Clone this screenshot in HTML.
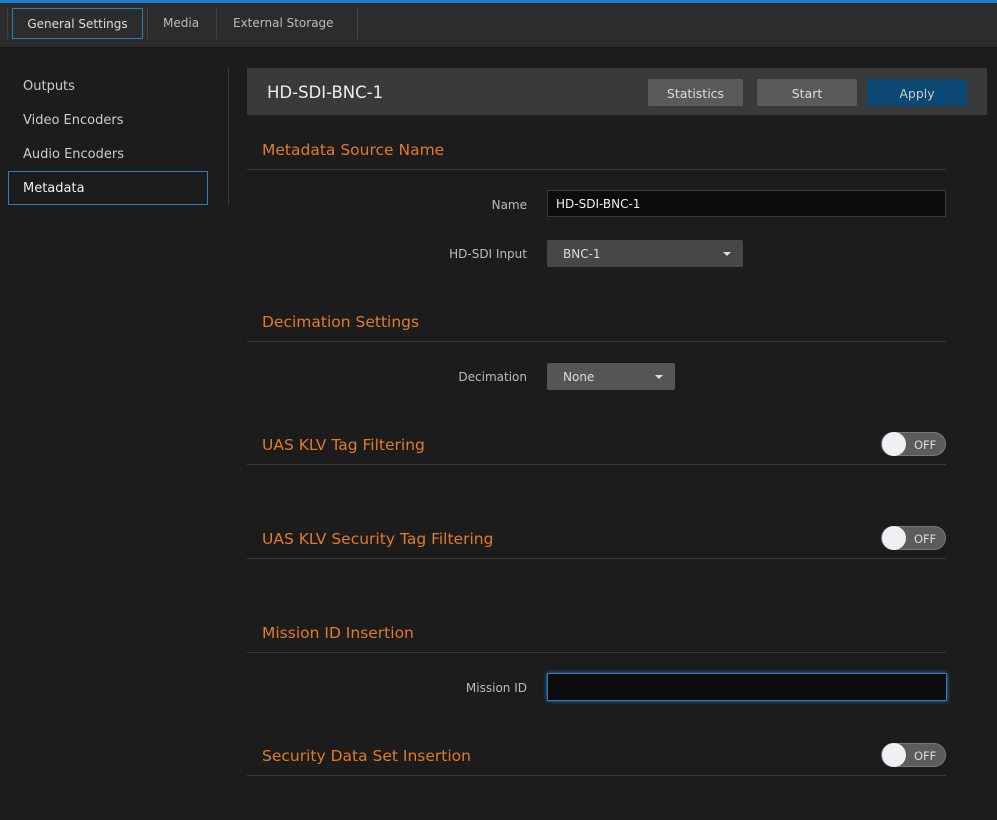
<!DOCTYPE html>
<html><head><style>
body{margin:0;width:997px;height:820px;background:#1c1c1c;font-family:"DejaVu Sans",sans-serif;position:relative;overflow:hidden;color:#ddd}
.a{position:absolute}
.top{left:0;top:0;width:997px;height:3px;background:#1d7bd0}
.nav{left:0;top:3px;width:997px;height:44px;background:#2c2c2c;border-bottom:1px solid #161616}
.tab{top:8px;height:29px;line-height:30px;font-size:12px;color:#bbb}
.sep{top:8px;width:1px;height:31px;background:#444}
.side{left:23px;font-size:13px;color:#ccc}
.h{left:262px;font-size:15.5px;color:#e07a2c}
.ln{left:247px;width:699px;height:1px;background:#3a3a3a}
.lbl{font-size:12px;color:#bbb;text-align:right;width:200px;left:327px}
.btn{top:79px;height:27px;line-height:29px;text-align:center;font-size:12.5px;color:#ddd;background:#5a5a5a;border-radius:2px;width:100px}
.tg{left:881px;width:65px;height:24px;border-radius:12px;background:#5c5c5c;border:1px solid #777;box-sizing:border-box}
.tg i{position:absolute;left:0;top:-1px;width:24px;height:24px;border-radius:50%;background:#eef0f3}
.tg b{position:absolute;left:32px;top:5px;font-size:11.5px;font-weight:normal;color:#ddd}
.sel{background:#474747;height:27px;border-radius:2px;font-size:12px;line-height:28px;color:#ddd;box-sizing:border-box;padding-left:16px}
.sel:after{content:"";position:absolute;right:12px;top:12px;border-left:4px solid transparent;border-right:4px solid transparent;border-top:4px solid #ddd}
</style></head><body>
<div class="a top"></div>
<div class="a nav"></div>
<div class="a sep" style="left:7px"></div>
<div class="a tab" style="left:12px;width:129px;border:1px solid #2d7cc6;text-align:center;color:#ddd">General Settings</div>
<div class="a sep" style="left:147px"></div>
<div class="a tab" style="left:163px">Media</div>
<div class="a sep" style="left:216px"></div>
<div class="a tab" style="left:233px">External Storage</div>
<div class="a sep" style="left:357px"></div>

<div class="a side" style="top:79px">Outputs</div>
<div class="a side" style="top:113px">Video Encoders</div>
<div class="a side" style="top:147px">Audio Encoders</div>
<div class="a" style="left:8px;top:171px;width:198px;height:32px;border:1px solid #2d7cc6"></div>
<div class="a side" style="top:181px;color:#eee">Metadata</div>
<div class="a" style="left:228px;top:68px;width:1px;height:137px;background:#3a3a3a"></div>

<div class="a" style="left:247px;top:68px;width:740px;height:47px;background:#3a3a3a"></div>
<div class="a" style="left:267px;top:83px;font-size:16.5px;color:#eee">HD-SDI-BNC-1</div>
<div class="a btn" style="left:648px;width:95px">Statistics</div>
<div class="a btn" style="left:757px">Start</div>
<div class="a btn" style="left:867px;background:#0b4874;color:#ccc">Apply</div>

<div class="a h" style="top:141px">Metadata Source Name</div>
<div class="a ln" style="top:169px"></div>
<div class="a lbl" style="top:198px">Name</div>
<div class="a" style="left:547px;top:190px;width:399px;height:27px;background:#0c0c0c;border:1px solid #3c3c3c;box-sizing:border-box;font-size:12px;line-height:26px;padding-left:8px;color:#eee">HD-SDI-BNC-1</div>
<div class="a lbl" style="top:247px">HD-SDI Input</div>
<div class="a sel" style="left:547px;top:240px;width:196px">BNC-1</div>

<div class="a h" style="top:313px">Decimation Settings</div>
<div class="a ln" style="top:341px"></div>
<div class="a lbl" style="top:370px">Decimation</div>
<div class="a sel" style="left:547px;top:363px;width:128px;background:#555">None</div>

<div class="a h" style="top:436px">UAS KLV Tag Filtering</div>
<div class="a tg" style="top:432px"><i></i><b>OFF</b></div>
<div class="a ln" style="top:464px"></div>

<div class="a h" style="top:530px">UAS KLV Security Tag Filtering</div>
<div class="a tg" style="top:526px"><i></i><b>OFF</b></div>
<div class="a ln" style="top:558px"></div>

<div class="a h" style="top:624px">Mission ID Insertion</div>
<div class="a ln" style="top:652px"></div>
<div class="a lbl" style="top:681px">Mission ID</div>
<div class="a" style="left:547px;top:673px;width:400px;height:28px;background:#0c0c0c;border:1px solid #2d7cc6;box-sizing:border-box;box-shadow:0 0 4px #2d7cc6"></div>

<div class="a h" style="top:747px">Security Data Set Insertion</div>
<div class="a tg" style="top:743px"><i></i><b>OFF</b></div>
<div class="a ln" style="top:775px"></div>
</body></html>
